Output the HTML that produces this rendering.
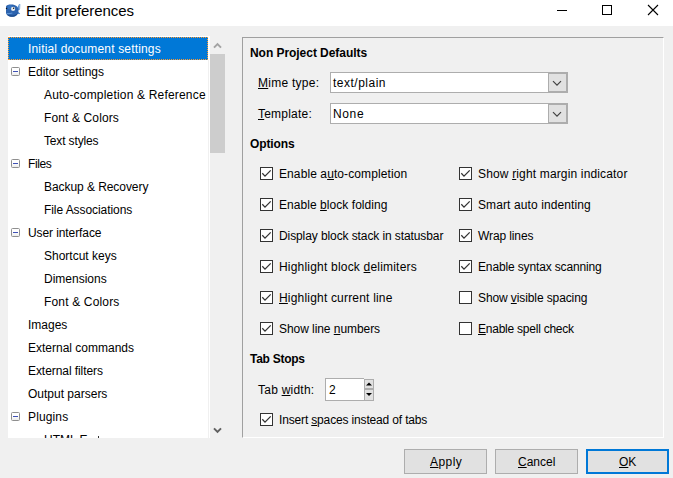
<!DOCTYPE html>
<html><head><meta charset="utf-8">
<style>
*{margin:0;padding:0;box-sizing:border-box}
html,body{width:673px;height:478px;overflow:hidden;background:#f0f0f0;font-family:"Liberation Sans",sans-serif;font-size:12px;color:#000}
.a{position:absolute;white-space:nowrap;line-height:15px}
.b{font-weight:bold}
u{text-decoration:underline;text-decoration-thickness:1px;text-underline-offset:1px}
#title{position:absolute;left:0;top:0;width:673px;height:26px;background:#fff}
#tree{position:absolute;left:8px;top:36px;width:202px;height:402px;background:#fff;overflow:hidden}
#sel{position:absolute;left:8px;top:37px;width:200px;height:23px;background:#0078d7;outline:1px dotted #ff9a30;outline-offset:-1px}
.ex{position:absolute;left:11px;width:9px;height:9px;border:1px solid #8f8f8f;border-radius:1.5px;background:linear-gradient(#fff,#fff 45%,#ececec)}
.ex:after{content:"";position:absolute;left:1px;top:3px;width:5px;height:1px;background:#3f51b5}
#frame{position:absolute;left:242px;top:37px;width:422px;height:401px;border-top:1px solid #a0a0a0;border-left:1px solid #a0a0a0;border-right:1px solid #fff;border-bottom:1px solid #fff}
.combo{position:absolute;left:330px;width:238px;height:21px;border:1px solid #adadad;background:#fff}
.dd{position:absolute;right:0;top:0;width:19px;height:19px;border:1px solid #adadad;background:#e1e1e1}
.cb{position:absolute;width:13px;height:13px;border:1px solid #333;background:#fff}
.btn{position:absolute;top:449px;width:83px;height:25px;border:1px solid #adadad;background:#e1e1e1}
.sp{position:absolute;left:364px;width:10px;border:1px solid #adadad;background:#e1e1e1}
</style></head><body>
<div id="title">
<svg style="position:absolute;left:0;top:0" width="24" height="22" viewBox="0 0 24 22">
<path d="M17.3 7.5L19.2 4L20.3 4.2L20 9.5L17.6 10.5Z" fill="#5b93d6"/>
<path d="M19.6 4.6L19.9 9" stroke="#c9d3dc" stroke-width="0.7"/>
<path d="M17.5 11.5L20.2 13.6L19 14.2L17 13Z" fill="#3f7ac4"/>
<path d="M6 6.5C6.5 5 8.5 4.6 11.5 4.6C15.5 4.6 18.5 6.8 18.5 10.4C18.5 14.4 15.8 16.8 12 16.8C8.4 16.8 6 14.6 6 12.5Z" fill="#2c63ae"/>
<path d="M6.5 13.5C7.5 15.6 9.5 16.8 12 16.8C15 16.8 17.4 15 18.2 12.2C16.5 14.5 14.5 15.4 12 15.4C9.6 15.4 7.8 14.8 6.5 13.5Z" fill="#1d4a8a"/>
<circle cx="10" cy="7.2" r="2.3" fill="#3a78c6" opacity="0.8"/>
<circle cx="13.1" cy="8.9" r="2.1" fill="#e4e8ec"/><circle cx="13.6" cy="8.3" r="0.75" fill="#111"/>
<circle cx="6.5" cy="8.4" r="0.7" fill="#111"/>
<path d="M6.8 13.6Q9.5 13.8 12.4 13" stroke="#5d95d8" stroke-width="1.2" fill="none"/>
</svg>
<div id="ttl" class="a" style="left:26px;top:1px;letter-spacing:-0.087px;font-size:15px;line-height:20px">Edit preferences</div>
<div style="position:absolute;left:557px;top:10px;width:10px;height:1px;background:#000"></div>
<div style="position:absolute;left:602px;top:5px;width:10px;height:10px;border:1px solid #000"></div>
<svg style="position:absolute;left:647px;top:4px" width="12" height="12" viewBox="0 0 12 12"><path d="M1 1L11 11M11 1L1 11" stroke="#000" stroke-width="1.1"/></svg>
</div>
<div id="tree"></div><div style="position:absolute;left:208px;top:60px;width:1px;height:378px;background:#f0f0f0"></div>
<div id="sel"></div>

<div class="ex" style="top:67px"></div>
<div class="ex" style="top:159px"></div>
<div class="ex" style="top:228px"></div>
<div class="ex" style="top:412px"></div>
<div style="position:absolute;left:0;top:0;width:673px;height:438px;overflow:hidden">
<div id="tr0" class="a" style="left:28px;top:42px;letter-spacing:0.163px;color:#fff">Initial document settings</div>
<div id="tr1" class="a" style="left:28px;top:65px;">Editor settings</div>
<div id="tr2" class="a" style="left:44px;top:88px;letter-spacing:0.185px;">Auto-completion &amp; Reference</div>
<div id="tr3" class="a" style="left:44px;top:111px;letter-spacing:0.125px;">Font &amp; Colors</div>
<div id="tr4" class="a" style="left:44px;top:134px;letter-spacing:-0.150px;">Text styles</div>
<div id="tr5" class="a" style="left:28px;top:157px;letter-spacing:-0.375px;">Files</div>
<div id="tr6" class="a" style="left:44px;top:180px;letter-spacing:-0.062px;">Backup &amp; Recovery</div>
<div id="tr7" class="a" style="left:44px;top:203px;letter-spacing:-0.069px;">File Associations</div>
<div id="tr8" class="a" style="left:28px;top:226px;letter-spacing:-0.092px;">User interface</div>
<div id="tr9" class="a" style="left:44px;top:249px;">Shortcut keys</div>
<div id="tr10" class="a" style="left:44px;top:272px;">Dimensions</div>
<div id="tr11" class="a" style="left:44px;top:295px;letter-spacing:0.167px;">Font &amp; Colors</div>
<div id="tr12" class="a" style="left:28px;top:318px;">Images</div>
<div id="tr13" class="a" style="left:28px;top:341px;">External commands</div>
<div id="tr14" class="a" style="left:28px;top:364px;letter-spacing:-0.067px;">External filters</div>
<div id="tr15" class="a" style="left:28px;top:387px;">Output parsers</div>
<div id="tr16" class="a" style="left:28px;top:410px;letter-spacing:0.133px;">Plugins</div>
<div id="tr17" class="a" style="left:44px;top:433px;">HTML E</div>
<div style="position:absolute;left:98px;top:436px;width:1px;height:2px;background:#333"></div>
</div>
<div style="position:absolute;left:210px;top:54px;width:15px;height:99px;background:#cdcdcd"></div>
<svg style="position:absolute;left:213px;top:42px" width="10" height="8" viewBox="0 0 10 8"><path d="M1 5.6L4.5 2.1L8 5.6" fill="none" stroke="#a3a3a3" stroke-width="2"/></svg>
<svg style="position:absolute;left:213px;top:426px" width="10" height="8" viewBox="0 0 10 8"><path d="M1 2.4L4.5 5.9L8 2.4" fill="none" stroke="#606060" stroke-width="2"/></svg>
<div id="frame"></div>

<div class="combo" style="top:72px"><div class="dd"><svg style="position:absolute;left:3px;top:6px" width="11" height="7" viewBox="0 0 11 7"><path d="M1 1.2L5 5.2L9 1.2" fill="none" stroke="#404040" stroke-width="1.2"/></svg></div></div>
<div class="combo" style="top:103px"><div class="dd"><svg style="position:absolute;left:3px;top:6px" width="11" height="7" viewBox="0 0 11 7"><path d="M1 1.2L5 5.2L9 1.2" fill="none" stroke="#404040" stroke-width="1.2"/></svg></div></div>
<div class="cb" style="left:260px;top:167px"><svg width="11" height="11" viewBox="0 0 11 11" style="position:absolute;left:0;top:0"><path d="M1.3 5.3L4 8.1L9.7 2.4" fill="none" stroke="#333" stroke-width="1.3"/></svg></div>
<div class="cb" style="left:459px;top:167px"><svg width="11" height="11" viewBox="0 0 11 11" style="position:absolute;left:0;top:0"><path d="M1.3 5.3L4 8.1L9.7 2.4" fill="none" stroke="#333" stroke-width="1.3"/></svg></div>
<div class="cb" style="left:260px;top:198px"><svg width="11" height="11" viewBox="0 0 11 11" style="position:absolute;left:0;top:0"><path d="M1.3 5.3L4 8.1L9.7 2.4" fill="none" stroke="#333" stroke-width="1.3"/></svg></div>
<div class="cb" style="left:459px;top:198px"><svg width="11" height="11" viewBox="0 0 11 11" style="position:absolute;left:0;top:0"><path d="M1.3 5.3L4 8.1L9.7 2.4" fill="none" stroke="#333" stroke-width="1.3"/></svg></div>
<div class="cb" style="left:260px;top:229px"><svg width="11" height="11" viewBox="0 0 11 11" style="position:absolute;left:0;top:0"><path d="M1.3 5.3L4 8.1L9.7 2.4" fill="none" stroke="#333" stroke-width="1.3"/></svg></div>
<div class="cb" style="left:459px;top:229px"><svg width="11" height="11" viewBox="0 0 11 11" style="position:absolute;left:0;top:0"><path d="M1.3 5.3L4 8.1L9.7 2.4" fill="none" stroke="#333" stroke-width="1.3"/></svg></div>
<div class="cb" style="left:260px;top:260px"><svg width="11" height="11" viewBox="0 0 11 11" style="position:absolute;left:0;top:0"><path d="M1.3 5.3L4 8.1L9.7 2.4" fill="none" stroke="#333" stroke-width="1.3"/></svg></div>
<div class="cb" style="left:459px;top:260px"><svg width="11" height="11" viewBox="0 0 11 11" style="position:absolute;left:0;top:0"><path d="M1.3 5.3L4 8.1L9.7 2.4" fill="none" stroke="#333" stroke-width="1.3"/></svg></div>
<div class="cb" style="left:260px;top:291px"><svg width="11" height="11" viewBox="0 0 11 11" style="position:absolute;left:0;top:0"><path d="M1.3 5.3L4 8.1L9.7 2.4" fill="none" stroke="#333" stroke-width="1.3"/></svg></div>
<div class="cb" style="left:459px;top:291px"></div>
<div class="cb" style="left:260px;top:322px"><svg width="11" height="11" viewBox="0 0 11 11" style="position:absolute;left:0;top:0"><path d="M1.3 5.3L4 8.1L9.7 2.4" fill="none" stroke="#333" stroke-width="1.3"/></svg></div>
<div class="cb" style="left:459px;top:322px"></div>
<div style="position:absolute;left:325px;top:378px;width:39px;height:23px;border:1px solid #adadad;border-right:none;background:#fff"></div>
<div class="sp" style="top:379px;height:10px"></div><div class="sp" style="top:389px;height:12px"></div>
<svg style="position:absolute;left:364px;top:379px" width="10" height="22" viewBox="0 0 10 22"><path d="M2 6.5L5 3.5L8 6.5Z" fill="#000"/><path d="M2 14L5 17L8 14Z" fill="#000"/></svg>
<div class="cb" style="left:260px;top:413px"><svg width="11" height="11" viewBox="0 0 11 11" style="position:absolute;left:0;top:0"><path d="M1.3 5.3L4 8.1L9.7 2.4" fill="none" stroke="#333" stroke-width="1.3"/></svg></div>
<div class="btn" style="left:404px"></div><div class="btn" style="left:495px"></div><div class="btn" style="left:586px;border:2px solid #0078d7"></div>
<div id="np" class="a b" style="left:250px;top:46px;letter-spacing:-0.047px;">Non Project Defaults</div>
<div id="mime" class="a" style="left:258px;top:76px;letter-spacing:0.267px;"><u>M</u>ime type:</div>
<div id="tplain" class="a" style="left:333px;top:76px;letter-spacing:0.500px;">text/plain</div>
<div id="tmpl" class="a" style="left:258px;top:107px;letter-spacing:0.212px;"><u>T</u>emplate:</div>
<div id="none" class="a" style="left:333px;top:107px;letter-spacing:0.633px;">None</div>
<div id="opt" class="a b" style="left:250px;top:137px;letter-spacing:-0.100px;">Options</div>
<div id="cl0" class="a" style="left:279px;top:167px;letter-spacing:0.095px;">Enable a<u>u</u>to-completion</div>
<div id="cl1" class="a" style="left:279px;top:198px;letter-spacing:0.053px;">Enable <u>b</u>lock folding</div>
<div id="cl2" class="a" style="left:279px;top:229px;letter-spacing:-0.097px;">Display block stack in statusbar</div>
<div id="cl3" class="a" style="left:279px;top:260px;letter-spacing:0.200px;">Highlight block <u>d</u>elimiters</div>
<div id="cl4" class="a" style="left:279px;top:291px;letter-spacing:0.190px;"><u>H</u>ighlight current line</div>
<div id="cl5" class="a" style="left:279px;top:322px;letter-spacing:-0.062px;">Show line <u>n</u>umbers</div>
<div id="cr0" class="a" style="left:478px;top:167px;letter-spacing:0.154px;">Show <u>r</u>ight margin indicator</div>
<div id="cr1" class="a" style="left:478px;top:198px;letter-spacing:0.105px;">Smart auto indenting</div>
<div id="cr2" class="a" style="left:478px;top:229px;letter-spacing:-0.111px;">Wrap lines</div>
<div id="cr3" class="a" style="left:478px;top:260px;letter-spacing:-0.143px;">Enable syntax scanning</div>
<div id="cr4" class="a" style="left:478px;top:291px;letter-spacing:-0.105px;">Show <u>v</u>isible spacing</div>
<div id="cr5" class="a" style="left:478px;top:322px;letter-spacing:-0.235px;"><u>E</u>nable spell check</div>
<div id="ts" class="a b" style="left:250px;top:352px;letter-spacing:-0.275px;">Tab Stops</div>
<div id="tw" class="a" style="left:258px;top:383px;letter-spacing:0.233px;">Tab <u>w</u>idth:</div>
<div id="two" class="a" style="left:329px;top:383px;">2</div>
<div id="ins" class="a" style="left:279px;top:413px;letter-spacing:-0.157px;">Insert <u>s</u>paces instead of tabs</div>
<div id="apply" class="a" style="left:430px;top:455px;letter-spacing:0.450px;"><u>A</u>pply</div>
<div id="cancel" class="a" style="left:518px;top:455px;"><u>C</u>ancel</div>
<div id="ok" class="a" style="left:619px;top:455px;"><u>O</u>K</div>
</body></html>
